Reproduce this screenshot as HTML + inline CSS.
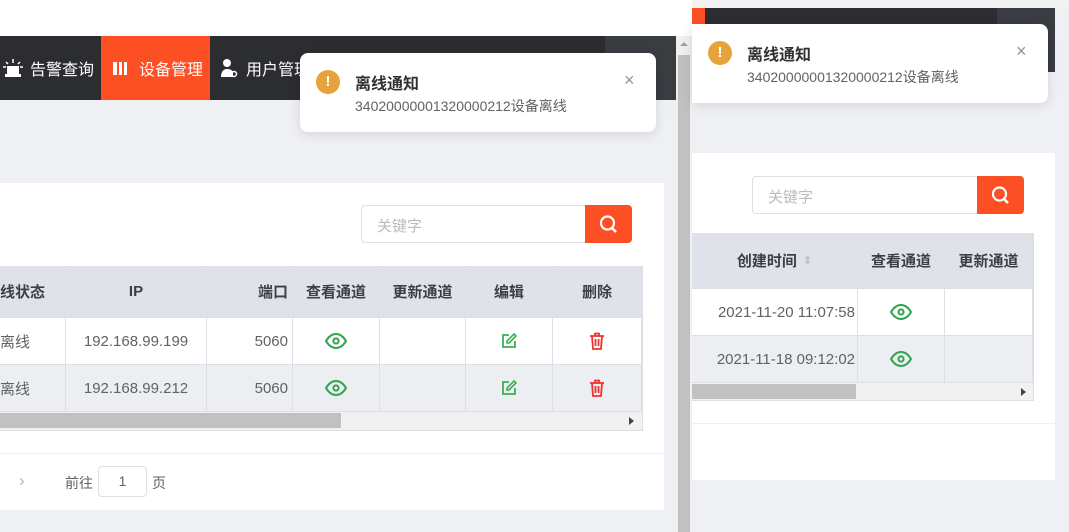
<!DOCTYPE html><html><head><meta charset="utf-8"><style>
*{margin:0;padding:0;box-sizing:border-box}
body{width:1069px;height:532px;overflow:hidden;position:relative;background:#eef0f4;font-family:"Liberation Sans","Noto Sans CJK SC",sans-serif;font-size:14px;color:#606266}
.a{position:absolute}
.nav{background:#2b2d31;color:#fff;font-size:15px}
.cell{position:absolute;display:flex;align-items:center;justify-content:center;border-right:1px solid #dcdfe6;border-bottom:1px solid #dcdfe6;font-size:15px}
.hd{background:#dfe2e8;font-weight:bold;color:#3d3f44}
.r1{background:#fff}.r2{background:#eceef2}
.notif{background:#fff;border-radius:8px;box-shadow:0 2px 12px rgba(0,0,0,.12)}
</style></head><body>
<div class="a" style="left:0;top:0;width:692px;height:36px;background:#fff"></div>
<div class="a nav" style="left:0;top:36px;width:676px;height:64px"></div>
<div class="a" style="left:605px;top:36px;width:71px;height:64px;background:#393c40"></div>
<div class="a" style="left:0;top:36px;height:64px;width:101px;display:flex;align-items:center;color:#fff;font-size:16px"><svg width="22" height="20" style="margin-left:2px" viewBox="0 0 22 20"><rect x="5" y="8" width="12" height="9" fill="#fff"/><rect x="3" y="16" width="16" height="3" fill="#fff"/><path d="M11 1v4M4 4l2 2M18 4l-2 2M1 9h3M18 9h3" stroke="#fff" stroke-width="1.5"/></svg><span style="margin-left:6px">告警查询</span></div>
<div class="a" style="left:101px;top:36px;width:109px;height:64px;background:#fc5024;display:flex;align-items:center;color:#fff;font-size:16px"><span style="margin-left:12px;display:inline-block;width:14px;height:13px;border-left:4px solid #fff;border-right:3px solid #fff;background:linear-gradient(90deg,transparent 2px,#fff 2px,#fff 5px,transparent 5px)"></span><span style="margin-left:12px">设备管理</span></div>
<div class="a" style="left:220px;top:36px;height:64px;display:flex;align-items:center;color:#fff;font-size:16px"><svg width="18" height="20" viewBox="0 0 18 20"><circle cx="7" cy="5" r="4" fill="#fff"/><path d="M1 19c0-6 3-8 6-8s5 1 6 3v5z" fill="#fff"/><circle cx="14" cy="16" r="2.5" fill="none" stroke="#fff" stroke-width="1.5"/></svg><span style="margin-left:8px">用户管理</span></div>
<div class="a" style="left:0;top:183px;width:664px;height:327px;background:#fff"></div>
<div class="a" style="left:361px;top:205px;width:226px;height:38px;border:1px solid #dcdfe6;border-radius:4px 0 0 4px;background:#fff;color:#b8bbc2;padding:9px 15px;font-size:15px">关键字</div>
<div class="a" style="left:585px;top:205px;width:47px;height:38px;background:#fc5024;border-radius:0 4px 4px 0"><svg width="47" height="38"><circle cx="22.5" cy="18" r="6.5" fill="none" stroke="#fff" stroke-width="2.2"/><path d="M27 23l4 4" stroke="#fff" stroke-width="2.4"/></svg></div>
<div class="a" style="left:0;top:266px;width:643px;height:165px;border:1px solid #dcdfe6;border-left:0;background:#fff"></div>
<div class="cell hd" style="left:0;top:266px;width:66px;height:52px;justify-content:flex-start">线状态</div>
<div class="cell hd" style="left:66px;top:266px;width:141px;height:52px">IP</div>
<div class="cell hd" style="left:207px;top:266px;width:86px;height:52px;justify-content:flex-end;padding-right:4px">端口</div>
<div class="cell hd" style="left:293px;top:266px;width:87px;height:52px">查看通道</div>
<div class="cell hd" style="left:380px;top:266px;width:86px;height:52px">更新通道</div>
<div class="cell hd" style="left:466px;top:266px;width:87px;height:52px">编辑</div>
<div class="cell hd" style="left:553px;top:266px;width:89px;height:52px">删除</div>
<div class="cell r1" style="left:0;top:318px;width:66px;height:47px;justify-content:flex-start">离线</div>
<div class="cell r1" style="left:66px;top:318px;width:141px;height:47px">192.168.99.199</div>
<div class="cell r1" style="left:207px;top:318px;width:86px;height:47px;justify-content:flex-end;padding-right:4px">5060</div>
<div class="cell r1" style="left:293px;top:318px;width:87px;height:47px"><svg width="22" height="16" viewBox="0 0 22 16"><path d="M1 8C4 3 7 1 11 1s7 2 10 7c-3 5-6 7-10 7S4 13 1 8z" fill="none" stroke="#2da44e" stroke-width="2"/><circle cx="11" cy="8" r="2.6" fill="none" stroke="#2da44e" stroke-width="2"/></svg></div>
<div class="cell r1" style="left:380px;top:318px;width:86px;height:47px"></div>
<div class="cell r1" style="left:466px;top:318px;width:87px;height:47px"><svg width="16" height="16" viewBox="0 0 16 16"><path d="M8 2H2v12h12V8" fill="none" stroke="#3bae54" stroke-width="1.8"/><path d="M13 1l2 2-7 7H6V8z" fill="none" stroke="#3bae54" stroke-width="1.6"/></svg></div>
<div class="cell r1" style="left:553px;top:318px;width:89px;height:47px"><svg width="16" height="18" viewBox="0 0 16 18"><path d="M1 4h14M6 4V1.5h4V4M3 4l1 13h8l1-13M6.5 7v7M9.5 7v7" fill="none" stroke="#f0322c" stroke-width="1.8"/></svg></div>
<div class="cell r2" style="left:0;top:365px;width:66px;height:47px;justify-content:flex-start">离线</div>
<div class="cell r2" style="left:66px;top:365px;width:141px;height:47px">192.168.99.212</div>
<div class="cell r2" style="left:207px;top:365px;width:86px;height:47px;justify-content:flex-end;padding-right:4px">5060</div>
<div class="cell r2" style="left:293px;top:365px;width:87px;height:47px"><svg width="22" height="16" viewBox="0 0 22 16"><path d="M1 8C4 3 7 1 11 1s7 2 10 7c-3 5-6 7-10 7S4 13 1 8z" fill="none" stroke="#2da44e" stroke-width="2"/><circle cx="11" cy="8" r="2.6" fill="none" stroke="#2da44e" stroke-width="2"/></svg></div>
<div class="cell r2" style="left:380px;top:365px;width:86px;height:47px"></div>
<div class="cell r2" style="left:466px;top:365px;width:87px;height:47px"><svg width="16" height="16" viewBox="0 0 16 16"><path d="M8 2H2v12h12V8" fill="none" stroke="#3bae54" stroke-width="1.8"/><path d="M13 1l2 2-7 7H6V8z" fill="none" stroke="#3bae54" stroke-width="1.6"/></svg></div>
<div class="cell r2" style="left:553px;top:365px;width:89px;height:47px"><svg width="16" height="18" viewBox="0 0 16 18"><path d="M1 4h14M6 4V1.5h4V4M3 4l1 13h8l1-13M6.5 7v7M9.5 7v7" fill="none" stroke="#f0322c" stroke-width="1.8"/></svg></div>
<div class="a" style="left:0;top:412px;width:642px;height:18px;background:#f1f1f1"></div>
<div class="a" style="left:0;top:413px;width:341px;height:15px;background:#c1c1c1"></div>
<div class="a" style="left:629px;top:417px;width:0;height:0;border-left:5px solid #444;border-top:4px solid transparent;border-bottom:4px solid transparent"></div>
<div class="a" style="left:0;top:453px;width:664px;height:1px;background:#eef0f4"></div>
<div class="a" style="left:19px;top:471px;color:#b0b3b8;font-size:17px">›</div>
<div class="a" style="left:65px;top:473px">前往</div>
<div class="a" style="left:98px;top:466px;width:49px;height:31px;border:1px solid #dcdfe6;border-radius:4px;text-align:center;line-height:29px;background:#fff">1</div>
<div class="a" style="left:152px;top:473px">页</div>
<div class="a" style="left:676px;top:36px;width:16px;height:496px;background:#f0f0f0"></div>
<div class="a" style="left:678px;top:55px;width:12px;height:477px;background:#c1c1c1"></div>
<div class="a" style="left:680px;top:42px;width:0;height:0;border-bottom:4px solid #a0a0a0;border-left:4px solid transparent;border-right:4px solid transparent"></div>
<div class="a notif" style="left:300px;top:53px;width:356px;height:79px"></div>
<div class="a" style="left:316px;top:70px;width:24px;height:24px;border-radius:50%;background:#e6a23c;color:#fff;font-weight:bold;text-align:center;line-height:24px;font-size:15px">!</div>
<div class="a" style="left:355px;top:70px;font-size:16px;font-weight:bold;color:#303133">离线通知</div>
<div class="a" style="left:355px;top:96px;color:#606266">34020000001320000212设备离线</div>
<div class="a" style="left:624px;top:70px;color:#909399;font-size:18px">×</div>
<div class="a" style="left:692px;top:0;width:377px;height:8px;background:#f2f2f2"></div>
<div class="a nav" style="left:692px;top:8px;width:363px;height:64px"></div>
<div class="a" style="left:692px;top:8px;width:13px;height:27px;background:#fc5024"></div>
<div class="a" style="left:997px;top:8px;width:58px;height:64px;background:#393c40"></div>
<div class="a" style="left:692px;top:153px;width:363px;height:327px;background:#fff"></div>
<div class="a" style="left:692px;top:423px;width:363px;height:1px;background:#eef0f4"></div>
<div class="a" style="left:752px;top:176px;width:227px;height:38px;border:1px solid #dcdfe6;border-radius:4px 0 0 4px;background:#fff;color:#b8bbc2;padding:9px 15px;font-size:15px">关键字</div>
<div class="a" style="left:977px;top:176px;width:47px;height:38px;background:#fc5024;border-radius:0 4px 4px 0"><svg width="47" height="38"><circle cx="22.5" cy="18" r="6.5" fill="none" stroke="#fff" stroke-width="2.2"/><path d="M27 23l4 4" stroke="#fff" stroke-width="2.4"/></svg></div>
<div class="a" style="left:692px;top:233px;width:342px;height:168px;border:1px solid #dcdfe6;border-left:0;background:#fff"></div>
<div class="cell hd" style="left:692px;top:233px;width:166px;height:56px">创建时间 <span style="color:#c0c4cc;font-size:11px;margin-left:6px">⬍</span></div>
<div class="cell hd" style="left:858px;top:233px;width:87px;height:56px">查看通道</div>
<div class="cell hd" style="left:945px;top:233px;width:88px;height:56px">更新通道</div>
<div class="cell r1" style="left:692px;top:289px;width:166px;height:47px;justify-content:flex-end;padding-right:2px">2021-11-20 11:07:58</div>
<div class="cell r1" style="left:858px;top:289px;width:87px;height:47px"><svg width="22" height="16" viewBox="0 0 22 16"><path d="M1 8C4 3 7 1 11 1s7 2 10 7c-3 5-6 7-10 7S4 13 1 8z" fill="none" stroke="#2da44e" stroke-width="2"/><circle cx="11" cy="8" r="2.6" fill="none" stroke="#2da44e" stroke-width="2"/></svg></div>
<div class="cell r1" style="left:945px;top:289px;width:88px;height:47px"></div>
<div class="cell r2" style="left:692px;top:336px;width:166px;height:47px;justify-content:flex-end;padding-right:2px">2021-11-18 09:12:02</div>
<div class="cell r2" style="left:858px;top:336px;width:87px;height:47px"><svg width="22" height="16" viewBox="0 0 22 16"><path d="M1 8C4 3 7 1 11 1s7 2 10 7c-3 5-6 7-10 7S4 13 1 8z" fill="none" stroke="#2da44e" stroke-width="2"/><circle cx="11" cy="8" r="2.6" fill="none" stroke="#2da44e" stroke-width="2"/></svg></div>
<div class="cell r2" style="left:945px;top:336px;width:88px;height:47px"></div>
<div class="a" style="left:692px;top:383px;width:341px;height:17px;background:#f1f1f1"></div>
<div class="a" style="left:692px;top:384px;width:164px;height:15px;background:#c1c1c1"></div>
<div class="a" style="left:1021px;top:388px;width:0;height:0;border-left:5px solid #444;border-top:4px solid transparent;border-bottom:4px solid transparent"></div>
<div class="a notif" style="left:692px;top:24px;width:356px;height:79px;border-radius:0 8px 8px 0"></div>
<div class="a" style="left:708px;top:41px;width:24px;height:24px;border-radius:50%;background:#e6a23c;color:#fff;font-weight:bold;text-align:center;line-height:24px;font-size:15px">!</div>
<div class="a" style="left:747px;top:41px;font-size:16px;font-weight:bold;color:#303133">离线通知</div>
<div class="a" style="left:747px;top:67px;color:#606266">34020000001320000212设备离线</div>
<div class="a" style="left:1016px;top:41px;color:#909399;font-size:18px">×</div>
</body></html>
